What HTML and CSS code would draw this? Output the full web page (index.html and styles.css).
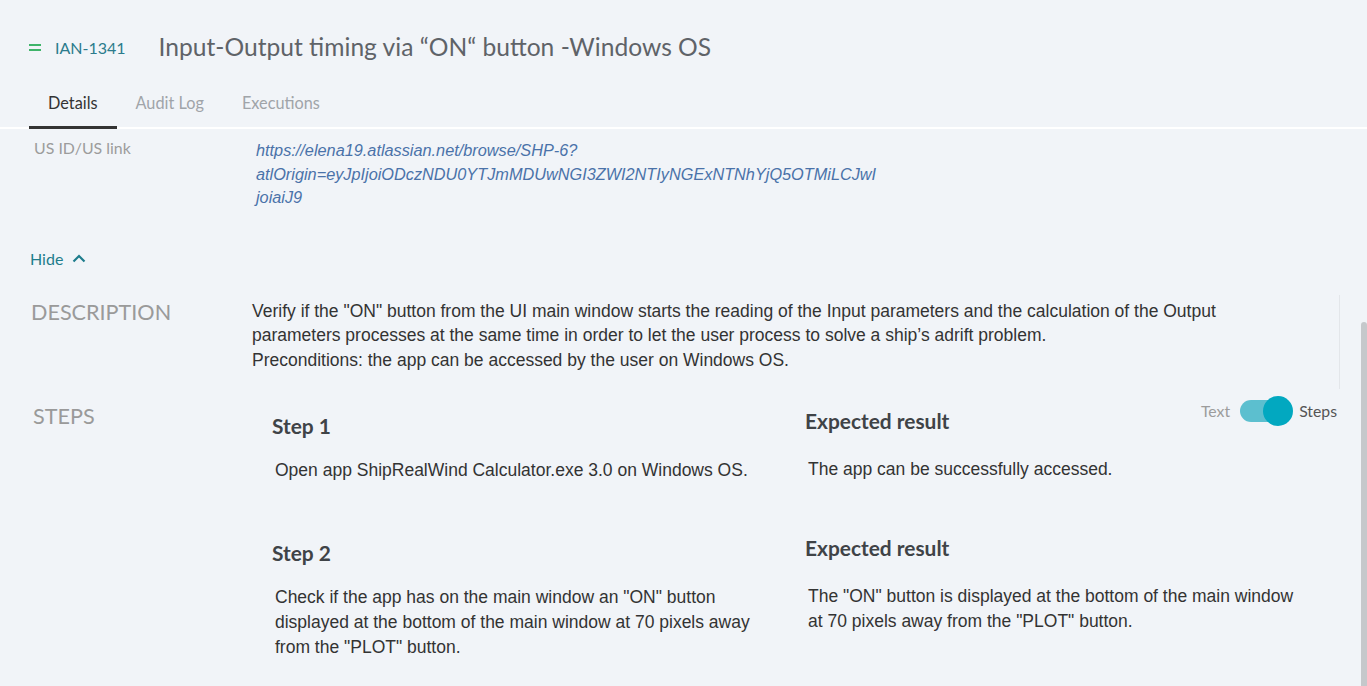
FILE: index.html
```html
<!DOCTYPE html>
<html lang="en">
<head>
<meta charset="utf-8">
<title>IAN-1341</title>
<link rel="stylesheet" href="styles.css">
</head>
<body>
<div class="page">
  <header class="header">
    <span class="prio" aria-hidden="true"><span></span><span></span></span>
    <span class="key">IAN-1341</span>
    <h1 class="title">Input-Output timing via “ON“ button -Windows OS</h1>
  </header>

  <nav class="tabs">
    <span class="tab active">Details</span>
    <span class="tab">Audit Log</span>
    <span class="tab">Executions</span>
  </nav>

  <section class="field">
    <div class="field-label">US ID/US link</div>
    <div class="field-link">https://elena19.atlassian.net/browse/SHP-6?<br>atlOrigin=eyJpIjoiODczNDU0YTJmMDUwNGI3ZWI2NTIyNGExNTNhYjQ5OTMiLCJwI<br>joiaiJ9</div>
  </section>

  <div class="hide">Hide
    <svg width="14" height="9" viewBox="0 0 14 9"><path d="M1.5 7.5 L7 2 L12.5 7.5" fill="none" stroke="#1f7d8c" stroke-width="2.2"/></svg>
  </div>

  <section class="block">
    <div class="block-label">DESCRIPTION</div>
    <div class="desc">Verify if the "ON" button from the UI main window starts the reading of the Input parameters and the calculation of the Output parameters processes at the same time in order to let the user process to solve a ship’s adrift problem.<br>Preconditions: the app can be accessed by the user on Windows OS.</div>
  </section>

  <section class="block steps-block">
    <div class="block-label">STEPS</div>
    <div class="steps">
      <div class="toggle">
        <span class="t-off">Text</span>
        <span class="switch"><span class="knob"></span></span>
        <span class="t-on">Steps</span>
      </div>
      <div class="step">
        <div class="cell left">
          <h3>Step 1</h3>
          <p>Open app ShipRealWind Calculator.exe 3.0 on Windows OS.</p>
        </div>
        <div class="cell right">
          <h3>Expected result</h3>
          <p>The app can be successfully accessed.</p>
        </div>
      </div>
      <div class="step">
        <div class="cell left">
          <h3>Step 2</h3>
          <p>Check if the app has on the main window an "ON" button displayed at the bottom of the main window at 70 pixels away from the "PLOT" button.</p>
        </div>
        <div class="cell right">
          <h3>Expected result</h3>
          <p>The "ON" button is displayed at the bottom of the main window at 70 pixels away from the "PLOT" button.</p>
        </div>
      </div>
    </div>
  </section>
</div>
<div class="scroll-thumb"></div>
</body>
</html>
```

FILE: styles.css
```css
html, body {
  margin: 0;
  padding: 0;
  height: 100%;
  overflow: hidden;
}
body {
  background: #f1f4f8;
  font-family: Lato, "Liberation Sans", sans-serif;
  color: #333;
}
.page {
  position: relative;
}
.header {
  display: flex;
  align-items: center;
  padding: 31px 0 0 29px;
  height: 32px;
}
.prio {
  display: flex;
  flex-direction: column;
  gap: 3px;
  width: 12px;
  margin-right: 14px;
}
.prio span {
  display: block;
  height: 2px;
  background: #3fb46a;
}
.key {
  font-size: 16px;
  color: #2b7b8c;
  margin-right: 33px;
}
.title {
  margin: 0;
  font-weight: 400;
  font-size: 24.6px;
  line-height: 32px;
  color: #5f6368;
}
.tabs {
  display: flex;
  margin-top: 20px;
  padding-left: 29px;
  border-bottom: 2px solid #ffffff;
  height: 44px;
}
.tab {
  padding: 10px 19px 0;
  font-size: 16.3px;
  line-height: 20px;
  color: #a0a4a9;
  height: 33px;
  border-bottom: 3px solid transparent;
}
.tab.active {
  color: #333;
  border-bottom-color: #333;
}
.field {
  display: flex;
  align-items: flex-start;
  margin-top: 9px;
  padding-left: 34px;
}
.field-label {
  width: 222px;
  font-size: 15.9px;
  line-height: 20px;
  color: #9c9c9c;
}
.field-link {
  padding-top: 1px;
  font-family: "Liberation Sans", Arial, sans-serif;
  font-style: italic;
  font-size: 16.3px;
  line-height: 23.5px;
  color: #4a72a9;
}
.hide {
  display: flex;
  align-items: center;
  gap: 9px;
  margin-top: 39px;
  padding-left: 30px;
  font-size: 16px;
  line-height: 20px;
  color: #1f7d8c;
}
.block {
  display: flex;
  align-items: flex-start;
  margin-top: 26px;
}
.block-label {
  width: 221px;
  padding: 3px 0 0 31px;
  font-size: 21.6px;
  line-height: 28px;
  color: #9a9a9a;
}
.desc {
  width: 1000px;
  padding: 4px 87px 16px 0;
  border-right: 1px solid #e3e6ea;
  font-family: "Liberation Sans", Arial, sans-serif;
  font-size: 17.5px;
  line-height: 24.7px;
  color: #333;
}
.steps-block {
  margin-top: 13px;
}
.steps-block .block-label {
  padding: 0 0 0 33px;
  width: 219px;
}
.steps {
  position: relative;
  width: 1087px;
  display: flex;
  flex-direction: column;
  gap: 46px;
}
.toggle {
  position: absolute;
  right: 2px;
  top: -2px;
  display: flex;
  align-items: center;
  font-size: 15.8px;
}
.t-off { color: #9c9c9c; margin-right: 10px; }
.t-on { color: #555; margin-left: 8px; }
.switch {
  position: relative;
  width: 51px;
  height: 22px;
  border-radius: 11px;
  background: #5cbfcf;
}
.knob {
  position: absolute;
  right: -2px;
  top: -4px;
  width: 30px;
  height: 30px;
  border-radius: 50%;
  background: #02a8c0;
}
.step {
  display: grid;
  grid-template-columns: 533px 1fr;
}
.cell h3 {
  margin: 0;
  font-size: 20.9px;
  line-height: 28px;
  font-weight: 700;
  color: #3f4347;
}
.cell p {
  margin: 0;
  font-family: "Liberation Sans", Arial, sans-serif;
  font-size: 17.5px;
  line-height: 25px;
  color: #333;
  padding-left: 3px;
}
.cell.left {
  padding: 10px 0 0 20px;
  max-width: 495px;
}
.cell.left p { margin-top: 18px; }
.cell.right {
  padding: 5px 36px 0 20px;
}
.cell.right p { margin-top: 22px; }
.scroll-thumb {
  position: fixed;
  right: 0;
  top: 322px;
  bottom: 0;
  width: 6px;
  background: #c5c8cb;
  border-radius: 3px 3px 0 0;
}
```
